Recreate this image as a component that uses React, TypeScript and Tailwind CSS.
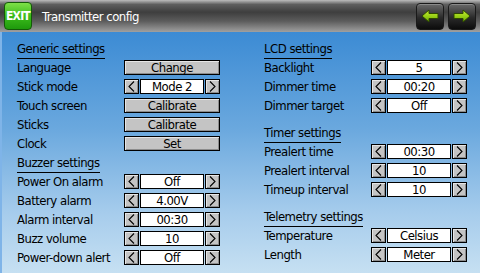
import { ReactNode } from 'react'

function Chevron({ dir }: { dir: 'left' | 'right' }) {
  return (
    <svg width="7" height="11" viewBox="0 0 7 11" className="block">
      <polyline
        points={dir === 'left' ? '6,0.5 1,5.5 6,10.5' : '1,0.5 6,5.5 1,10.5'}
        fill="none"
        stroke="#000"
        strokeWidth="1.1"
      />
    </svg>
  )
}

function ArrowBox({ dir }: { dir: 'left' | 'right' }) {
  return (
    <div className="w-[15px] h-full flex items-center justify-center border border-black bg-[#c4c4c4] shadow-[inset_1px_1px_0_#e6e6e6,inset_-1px_-1px_0_#8c8c8c]">
      <Chevron dir={dir} />
    </div>
  )
}

function Spin({ value }: { value: string }) {
  return (
    <div className="flex h-[15px] w-[96px] gap-[1px]">
      <ArrowBox dir="left" />
      <div className="flex-1 flex items-center justify-center border border-black bg-white leading-none">
        {value}
      </div>
      <ArrowBox dir="right" />
    </div>
  )
}

function Button({ label }: { label: string }) {
  return (
    <div className="flex h-[15px] w-[96px] items-center justify-center border border-black bg-[#c4c4c4] leading-none shadow-[inset_1px_1px_0_#e6e6e6,inset_-1px_-1px_0_#8c8c8c]">
      {label}
    </div>
  )
}

function Row({ label, children }: { label: string; children: ReactNode }) {
  return (
    <div className="flex h-[19px] items-center">
      <span className="w-[107px] leading-none">{label}</span>
      {children}
    </div>
  )
}

function Section({ title }: { title: string }) {
  return (
    <div className="h-[19px]">
      <span className="inline-block border-b border-black leading-[18px]">{title}</span>
    </div>
  )
}

function BlockArrow({ dir }: { dir: 'left' | 'right' }) {
  const pts =
    dir === 'left'
      ? '1,7 8,1 8,4.5 17,4.5 17,9.5 8,9.5 8,13'
      : '17,7 10,1 10,4.5 1,4.5 1,9.5 10,9.5 10,13'
  return (
    <svg width="18" height="14" viewBox="0 0 18 14">
      <defs>
        <linearGradient id={`ga-${dir}`} x1="0" y1="0" x2="0" y2="1">
          <stop offset="0" stopColor="#c8f030" />
          <stop offset="1" stopColor="#6cb000" />
        </linearGradient>
      </defs>
      <polygon points={pts} fill={`url(#ga-${dir})`} stroke="#2e4a00" strokeWidth="1" strokeLinejoin="round" />
    </svg>
  )
}

function NavButton({ dir }: { dir: 'left' | 'right' }) {
  return (
    <div className="w-[28px] h-[27px] rounded-[4px] flex items-center justify-center border border-[#1a1a1a] bg-[linear-gradient(#6a6a6a,#2a2a2a_55%,#0c0c0c)] shadow-[inset_0_1px_0_#8a8a8a]">
      <BlockArrow dir={dir} />
    </div>
  )
}

export default function App() {
  return (
    <div className="w-[480px] h-[273px] overflow-hidden flex flex-col font-['DejaVu_Sans_Condensed','DejaVu_Sans',sans-serif] text-[13px] tracking-[-0.5px] text-black">
      {/* Header */}
      <div className="h-[32px] flex items-center px-[4px] bg-[linear-gradient(#bcbcbc,#5e5e5e_14%,#3e3e3e_38%,#5c5c5c_66%,#a0a0a0)]">
        <div className="w-[28px] h-[28px] rounded-[4px] flex items-center justify-center border border-[#145a08] bg-[linear-gradient(#7ee048,#3cbc1c_50%,#1e9a0c)] text-white font-bold text-[12px] tracking-[-0.8px] leading-none">
          EXIT
        </div>
        <span className="ml-[10px] text-white text-[13px] tracking-[-0.5px] leading-none">Transmitter config</span>
        <div className="ml-auto flex gap-[4px]">
          <NavButton dir="left" />
          <NavButton dir="right" />
        </div>
      </div>

      {/* Body */}
      <div className="flex-1 flex pl-[15px] pt-[7px] border-l-2 border-[#7fb4e8] bg-[linear-gradient(#3c8bd4,#6aa8de_40%,#a6ccec_75%,#c6e0f2)]">
        <div className="w-[247px] flex flex-col">
          <Section title="Generic settings" />
          <Row label="Language"><Button label="Change" /></Row>
          <Row label="Stick mode"><Spin value="Mode 2" /></Row>
          <Row label="Touch screen"><Button label="Calibrate" /></Row>
          <Row label="Sticks"><Button label="Calibrate" /></Row>
          <Row label="Clock"><Button label="Set" /></Row>
          <Section title="Buzzer settings" />
          <Row label="Power On alarm"><Spin value="Off" /></Row>
          <Row label="Battery alarm"><Spin value="4.00V" /></Row>
          <Row label="Alarm interval"><Spin value="00:30" /></Row>
          <Row label="Buzz volume"><Spin value="10" /></Row>
          <Row label="Power-down alert"><Spin value="Off" /></Row>
        </div>
        <div className="flex flex-col">
          <Section title="LCD settings" />
          <Row label="Backlight"><Spin value="5" /></Row>
          <Row label="Dimmer time"><Spin value="00:20" /></Row>
          <Row label="Dimmer target"><Spin value="Off" /></Row>
          <div className="h-[8px]" />
          <Section title="Timer settings" />
          <Row label="Prealert time"><Spin value="00:30" /></Row>
          <Row label="Prealert interval"><Spin value="10" /></Row>
          <Row label="Timeup interval"><Spin value="10" /></Row>
          <div className="h-[8px]" />
          <Section title="Telemetry settings" />
          <Row label="Temperature"><Spin value="Celsius" /></Row>
          <Row label="Length"><Spin value="Meter" /></Row>
        </div>
      </div>
    </div>
  )
}
